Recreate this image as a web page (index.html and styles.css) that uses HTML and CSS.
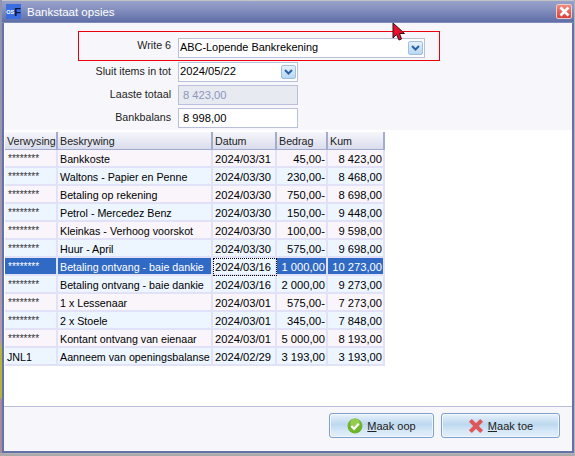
FILE: index.html
```html
<!DOCTYPE html>
<html>
<head>
    <title>Bankstaat opsies</title>
    <link rel="stylesheet" href="styles.css">
</head>
<body>
    <div class="window">
        <div class="titlebar">
            <div class="app-icon"><span class="app-os">OS</span><span class="app-f">F</span></div>
            <div class="title">Bankstaat opsies</div>
            <div class="close">
                <svg width="11" height="11" viewBox="0 0 11 11"><path d="M1.5 1.5 L9.5 9.5 M9.5 1.5 L1.5 9.5" stroke="#fff" stroke-width="2.6" fill="none"/></svg>
            </div>
        </div>

        <div class="form">
            <div class="row-marked">
                <label class="field-label">Write 6</label>
                <div class="field field-wide">
                    <span>ABC-Lopende Bankrekening</span>
                    <div class="drop"><svg width="9" height="6" viewBox="0 0 9 6"><path d="M1 1 L4.5 4.5 L8 1" stroke="#2a62a8" stroke-width="2" fill="none"/></svg></div>
                </div>
            </div>
            <div class="row">
                <label class="field-label">Sluit items in tot</label>
                <div class="field">
                    <span class="digits">2024/05/22</span>
                    <div class="drop"><svg width="9" height="6" viewBox="0 0 9 6"><path d="M1 1 L4.5 4.5 L8 1" stroke="#2a62a8" stroke-width="2" fill="none"/></svg></div>
                </div>
            </div>
            <div class="row">
                <label class="field-label">Laaste totaal</label>
                <div class="field field-edit field-off"><span class="digits">8 423,00</span></div>
            </div>
            <div class="row">
                <label class="field-label">Bankbalans</label>
                <div class="field field-edit"><span class="digits">8 998,00</span></div>
            </div>
        </div>

        <div class="grid-area">
            <table class="grid">
                <colgroup>
                    <col class="col-ref"><col class="col-desc"><col class="col-date"><col class="col-amt"><col class="col-kum">
                </colgroup>
                <thead>
                    <tr><th>Verwysing</th><th>Beskrywing</th><th>Datum</th><th>Bedrag</th><th>Kum</th></tr>
                </thead>
                <tbody>
                    <tr class="pink"><td class="stars">********</td><td>Bankkoste</td><td class="digits">2024/03/31</td><td class="num">45,00-</td><td class="num">8 423,00</td></tr>
                    <tr class="blue"><td class="stars">********</td><td>Waltons - Papier en Penne</td><td class="digits">2024/03/30</td><td class="num">230,00-</td><td class="num">8 468,00</td></tr>
                    <tr class="pink"><td class="stars">********</td><td>Betaling op rekening</td><td class="digits">2024/03/30</td><td class="num">750,00-</td><td class="num">8 698,00</td></tr>
                    <tr class="blue"><td class="stars">********</td><td>Petrol - Mercedez Benz</td><td class="digits">2024/03/30</td><td class="num">150,00-</td><td class="num">9 448,00</td></tr>
                    <tr class="pink"><td class="stars">********</td><td>Kleinkas - Verhoog voorskot</td><td class="digits">2024/03/30</td><td class="num">100,00-</td><td class="num">9 598,00</td></tr>
                    <tr class="blue"><td class="stars">********</td><td>Huur - April</td><td class="digits">2024/03/30</td><td class="num">575,00-</td><td class="num">9 698,00</td></tr>
                    <tr class="selected"><td class="stars">********</td><td>Betaling ontvang - baie dankie</td><td class="digits focus">2024/03/16</td><td class="num">1 000,00</td><td class="num">10 273,00</td></tr>
                    <tr class="blue"><td class="stars">********</td><td>Betaling ontvang - baie dankie</td><td class="digits">2024/03/16</td><td class="num">2 000,00</td><td class="num">9 273,00</td></tr>
                    <tr class="pink"><td class="stars">********</td><td>1 x Lessenaar</td><td class="digits">2024/03/01</td><td class="num">575,00-</td><td class="num">7 273,00</td></tr>
                    <tr class="blue"><td class="stars">********</td><td>2 x Stoele</td><td class="digits">2024/03/01</td><td class="num">345,00-</td><td class="num">7 848,00</td></tr>
                    <tr class="pink"><td class="stars">********</td><td>Kontant ontvang van eienaar</td><td class="digits">2024/03/01</td><td class="num">5 000,00</td><td class="num">8 193,00</td></tr>
                    <tr class="blue"><td>JNL1</td><td>Aanneem van openingsbalanse</td><td class="digits">2024/02/29</td><td class="num">3 193,00</td><td class="num">3 193,00</td></tr>
                </tbody>
            </table>
        </div>

        <div class="footer">
            <button class="btn btn-open" type="button">
                <svg width="16" height="16" viewBox="0 0 17 17">
                    <circle cx="8.5" cy="8.5" r="8" fill="#6fb52c"/>
                    <circle cx="8.5" cy="5.5" r="5" fill="#93cc4e"/>
                    <path d="M4.5 8.5 L7.5 11.5 L12.5 6" stroke="#fff" stroke-width="2.4" fill="none"/>
                </svg>
                <span><u>M</u>aak oop</span>
            </button>
            <button class="btn btn-shut" type="button">
                <svg width="16" height="16" viewBox="0 0 17 17"><path d="M2.5 2.5 L14.5 14.5 M14.5 2.5 L2.5 14.5" stroke="#e0575a" stroke-width="4.4" fill="none"/></svg>
                <span><u>M</u>aak toe</span>
            </button>
        </div>
    </div>

    <svg class="cursor" width="14" height="20" viewBox="0 0 14 20">
        <path d="M1 1 L1 16 L4.5 12.5 L7 18 L9.5 17 L7.5 11.5 L12.5 11.5 Z" fill="#e8112d" stroke="#3a0a14" stroke-width="1"/>
    </svg>
</body>
</html>
```
FILE: styles.css
```css
html, body {
    margin: 0;
    padding: 0;
    height: 100%;
}

body {
    font-family: "Liberation Sans", Arial, sans-serif;
    font-size: 10.7px;
    color: #000;
    /* sliver of desktop showing down the left edge of the dialog */
    background: linear-gradient(#8f93b0, #b09ab0 340px, #b5b53a 350px, #b5b53a 397px, #a8899f 400px, #a8899f 453px, #aaa 453px);
    overflow: hidden;
    position: relative;
    width: 575px;
    height: 456px;
}

.window {
    box-sizing: border-box;
    width: 572px;
    height: 453px;
    margin-left: 2px;
    background-color: #f7f7fb;
    border: 2px solid #6472aa;
    border-top: 0;
    box-shadow: 3px 1px 0 #b4b4b4;
    display: flex;
    flex-direction: column;
}

.titlebar {
    height: 23px;
    margin: 0 -2px;
    padding: 0 2px 0 4px;
    flex: none;
    display: flex;
    align-items: center;
    background: linear-gradient(#97a1c9, #8a95c2 30%, #606ea8);
    border-top: 1px solid #c4c4c4;
    border-bottom: 1px solid #7e8ab8;
    box-sizing: border-box;
}

.app-icon {
    width: 15px;
    height: 15px;
    background-color: #3b6fe0;
    display: flex;
    align-items: center;
    justify-content: flex-end;
    overflow: hidden;
}

.app-os {
    font-size: 5.5px;
    font-weight: bold;
    color: #fff;
}

.app-f {
    font-size: 11px;
    font-weight: bold;
    color: #0c1440;
}

.title {
    flex: 1;
    margin-left: 6px;
    font-size: 11.5px;
    color: #fff;
}

.close {
    width: 16px;
    height: 15px;
    border-radius: 2px;
    border: 1px solid #ecc;
    box-sizing: border-box;
    background: linear-gradient(#f08a80, #d8403c);
    display: flex;
    align-items: center;
    justify-content: center;
}

.form {
    flex: none;
    height: 107px;
    box-sizing: border-box;
    padding-top: 8px;
    display: flex;
    flex-direction: column;
}

.row-marked {
    box-sizing: border-box;
    width: 362px;
    height: 30px;
    margin-left: 74px;
    margin-bottom: -2px;
    border: 1px solid #e8000d;
    padding: 6px 0 0;
    display: flex;
}

.row-marked .field-label {
    width: 92px;
    line-height: 15px;
}

.row {
    margin-top: 3px;
    height: 20px;
    display: flex;
}

.field-label {
    width: 167px;
    height: 19px;
    line-height: 18px;
    text-align: right;
    color: #222;
    margin-right: 7px;
    flex: none;
}

.field {
    box-sizing: border-box;
    width: 120px;
    height: 20px;
    border: 1px solid #b9c0dc;
    background-color: #fff;
    padding-left: 1px;
    line-height: 17px;
    display: flex;
    justify-content: space-between;
}

.field-wide {
    width: 247px;
    font-size: 10.9px;
}

.field-edit {
    padding-left: 4px;
    line-height: 18px;
}

.field-off {
    background-color: #e8eaf2;
    color: #8d96bb;
}

.digits {
    font-size: 11.2px;
}

.drop {
    width: 15px;
    height: 14px;
    margin: 2px 1px 0 0;
    box-sizing: border-box;
    border: 1px solid #9cc0e4;
    border-radius: 2px;
    background: linear-gradient(#e6f1fb, #b9d7f2);
    display: flex;
    align-items: center;
    justify-content: center;
}

.grid-area {
    flex: 1;
    min-height: 0;
    background-color: #fff;
    border-bottom: 1px solid #b9c0dc;
    padding-top: 2px;
    padding-left: 1px;
}

.grid {
    table-layout: fixed;
    width: 380px;
    border-collapse: separate;
    border-spacing: 0;
}

.col-ref { width: 53px; }
.col-desc { width: 155px; }
.col-date { width: 64px; }
.col-amt { width: 51px; }
.col-kum { width: 57px; }

.grid th {
    height: 18px;
    box-sizing: border-box;
    padding: 0 2px;
    font-weight: normal;
    text-align: left;
    color: #222;
    background: linear-gradient(#f6f7fb, #d9dcec);
    border-right: 2px solid #a4acce;
    border-bottom: 1px solid #a4acce;
    white-space: nowrap;
    overflow: hidden;
}

.grid td {
    height: 18px;
    box-sizing: border-box;
    padding: 3px 1px 0 2px;
    line-height: 13px;
    border-right: 2px solid #e1e1f7;
    border-bottom: 2px solid #e1e1f7;
    white-space: nowrap;
    overflow: hidden;
}

.grid .num {
    text-align: right;
    font-size: 11.2px;
}

.grid .stars {
    font-size: 10px;
    vertical-align: top;
    line-height: 11px;
    padding-left: 3px;
    color: #333;
}

.pink td { background-color: #f9f5fb; }
.blue td { background-color: #edf5ff; }

.grid .selected td {
    background-color: #316ac5;
    color: #fff;
}

.grid .selected td.focus {
    background-color: #edf5ff;
    color: #000;
    outline: 1px dotted #000;
    outline-offset: -1px;
}

.footer {
    flex: none;
    height: 44px;
    box-sizing: border-box;
    padding: 6px 12px 0 0;
    display: flex;
    justify-content: flex-end;
    gap: 7px;
}

.btn {
    box-sizing: border-box;
    height: 25px;
    padding: 0;
    font-family: inherit;
    font-size: 11px;
    color: #222;
    border: 1px solid #7da2ce;
    border-radius: 3px;
    box-shadow: inset 0 0 0 1px #f2f7fc;
    background: linear-gradient(#e8f2fb, #bcd8ef 45%, #d4e6f6 70%, #e4eff9);
    display: flex;
    align-items: center;
    justify-content: center;
    gap: 4px;
}

.btn-open { width: 105px; }
.btn-shut { width: 119px; }

.cursor {
    position: absolute;
    left: 392px;
    top: 22px;
}
```
